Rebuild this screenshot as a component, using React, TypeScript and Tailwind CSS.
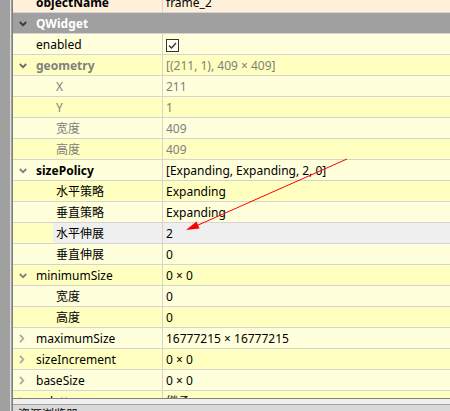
import React from "react";

type Row = {
  label: string;
  value?: React.ReactNode;
  child?: boolean;
  chevron?: "down" | "right";
  bg: "L" | "D" | "P";
  labelCls?: string;
  valueCls?: string;
  selected?: boolean;
};

const LIGHT = "bg-[#ffffdc]";
const DARK = "bg-[#ffffbf]";
const PEACH = "bg-[#fff0dc]";

function Chevron({ dir, color }: { dir: "down" | "right"; color: string }) {
  if (dir === "down")
    return (
      <svg width="8" height="6" viewBox="0 0 8 6" className="block">
        <polyline points="0.8,1 4,4.2 7.2,1" fill="none" stroke={color} strokeWidth="1.8" />
      </svg>
    );
  return (
    <svg width="6" height="9" viewBox="0 0 6 9" className="block">
      <polyline points="1,0.8 4.3,4.5 1,8.2" fill="none" stroke={color} strokeWidth="1.8" />
    </svg>
  );
}

function Checkbox() {
  return (
    <div className="w-[13px] h-[13px] border border-[#333333] bg-[#fffff4] flex items-center justify-center">
      <svg width="11" height="11" viewBox="0 0 11 11" className="block">
        <polyline points="2,5.5 4.5,8 9,3" fill="none" stroke="#333333" strokeWidth="1.3" />
      </svg>
    </div>
  );
}

const rows: Row[] = [
  { label: "enabled", value: <Checkbox />, bg: "L" },
  { label: "geometry", value: "[(211, 1), 409 × 409]", chevron: "down", bg: "D", labelCls: "font-bold text-[#808080]", valueCls: "text-[#808080]" },
  { label: "X", value: "211", child: true, bg: "L", labelCls: "text-[#808080]", valueCls: "text-[#808080]" },
  { label: "Y", value: "1", child: true, bg: "D", labelCls: "text-[#808080]", valueCls: "text-[#808080]" },
  { label: "宽度", value: "409", child: true, bg: "L", labelCls: "text-[#808080]", valueCls: "text-[#808080]" },
  { label: "高度", value: "409", child: true, bg: "D", labelCls: "text-[#808080]", valueCls: "text-[#808080]" },
  { label: "sizePolicy", value: "[Expanding, Expanding, 2, 0]", chevron: "down", bg: "L", labelCls: "font-bold" },
  { label: "水平策略", value: "Expanding", child: true, bg: "D" },
  { label: "垂直策略", value: "Expanding", child: true, bg: "L" },
  { label: "水平伸展", value: "2", child: true, bg: "D", selected: true },
  { label: "垂直伸展", value: "0", child: true, bg: "L" },
  { label: "minimumSize", value: "0 × 0", chevron: "down", bg: "D" },
  { label: "宽度", value: "0", child: true, bg: "L" },
  { label: "高度", value: "0", child: true, bg: "D" },
  { label: "maximumSize", value: "16777215 × 16777215", chevron: "right", bg: "L" },
  { label: "sizeIncrement", value: "0 × 0", chevron: "right", bg: "D" },
  { label: "baseSize", value: "0 × 0", chevron: "right", bg: "L" },
  { label: "palette", value: "继承", chevron: "right", bg: "D" },
];

function bgOf(b: Row["bg"]) {
  return b === "L" ? LIGHT : b === "D" ? DARK : PEACH;
}

function PropRow({ r }: { r: Row }) {
  const bg = bgOf(r.bg);
  const chevColor = r.chevron === "right" ? "#a8a8a8" : r.label === "geometry" ? "#6a6a6a" : "#808080";
  if (r.child) {
    const inner = r.selected ? "bg-[#efefef]" : bg;
    return (
      <div className={`flex h-[21px] border-b border-[#d4d4d4] ${bg}`}>
        <div className="w-[40px] shrink-0" />
        <div className={`flex flex-1 ${inner}`}>
          <div className={`w-[110px] shrink-0 border-r border-[#d4d4d4] pl-[3px] pt-[2px] flex items-center leading-[18px] ${r.labelCls ?? "text-black"}`}>
            {r.label}
          </div>
          <div className={`flex-1 pl-[3px] pt-[2px] flex items-center leading-[18px] ${r.valueCls ?? "text-black"}`}>{r.value}</div>
        </div>
      </div>
    );
  }
  return (
    <div className={`flex h-[21px] border-b border-[#d4d4d4] ${bg}`}>
      <div className="w-[23px] shrink-0 flex items-center pl-[6px] pt-[1px]">
        {r.chevron && <Chevron dir={r.chevron} color={chevColor} />}
      </div>
      <div className={`w-[127px] shrink-0 border-r border-[#d4d4d4] pt-[2px] flex items-center leading-[18px] ${r.labelCls ?? "text-black"}`}>
        {r.label}
      </div>
      <div className={`flex-1 pl-[3px] pt-[2px] flex items-center leading-[18px] ${r.valueCls ?? "text-black"}`}>{r.value}</div>
    </div>
  );
}

export default function App() {
  return (
    <div
      className="relative w-[450px] h-[411px] overflow-hidden flex bg-[#d9d9d9] text-[12px]"
      style={{ fontFamily: "'Noto Sans', 'Noto Sans CJK SC', sans-serif" }}
    >
      <div className="w-[10px] shrink-0 bg-[#a0a0a0]" />
      <div className="w-[1px] shrink-0 bg-[#e3e3e3]" />
      <div className="w-[1px] shrink-0 bg-[#a0a0a0]" />
      <div className="flex-1 flex flex-col border-l border-[#808080] min-w-0">
        <div className="h-[399px] shrink-0 overflow-hidden border-b border-[#808080] bg-[#ffffdc]">
          <div className="mt-[-8px]">
            <div className={`flex h-[21px] border-b border-[#d4d4d4] ${PEACH}`}>
              <div className="w-[23px] shrink-0" />
              <div className="w-[127px] shrink-0 border-r border-[#d4d4d4] pt-[2px] flex items-center leading-[18px] font-bold text-black">
                objectName
              </div>
              <div className="flex-1 pl-[3px] pt-[2px] flex items-center leading-[18px] text-black">frame_2</div>
            </div>
            <div className="flex h-[21px] border-b border-[#d4d4d4] bg-[#a0a0a0]">
              <div className="w-[23px] shrink-0 flex items-center pl-[6px] pt-[1px]">
                <Chevron dir="down" color="#3a3a3a" />
              </div>
              <div className="flex items-center pt-[2px] leading-[18px] font-bold text-white">QWidget</div>
            </div>
            {rows.map((r, i) => (
              <PropRow key={i} r={r} />
            ))}
          </div>
        </div>
        <div className="h-[6px] shrink-0 bg-[#f0f0f0] border-b border-[#a0a0a0]" />
        <div className="flex-1 bg-[#d9d9d9] pl-[5px] pt-[3px] leading-[14px] text-black overflow-hidden">资源浏览器</div>
      </div>
      <svg className="absolute left-0 top-0 pointer-events-none" width="450" height="411">
        <line x1="347" y1="159" x2="196" y2="226" stroke="#ff0000" strokeWidth="1" />
        <polygon points="186,230 196.5,221.5 199.5,228.5" fill="#ff0000" />
      </svg>
    </div>
  );
}
